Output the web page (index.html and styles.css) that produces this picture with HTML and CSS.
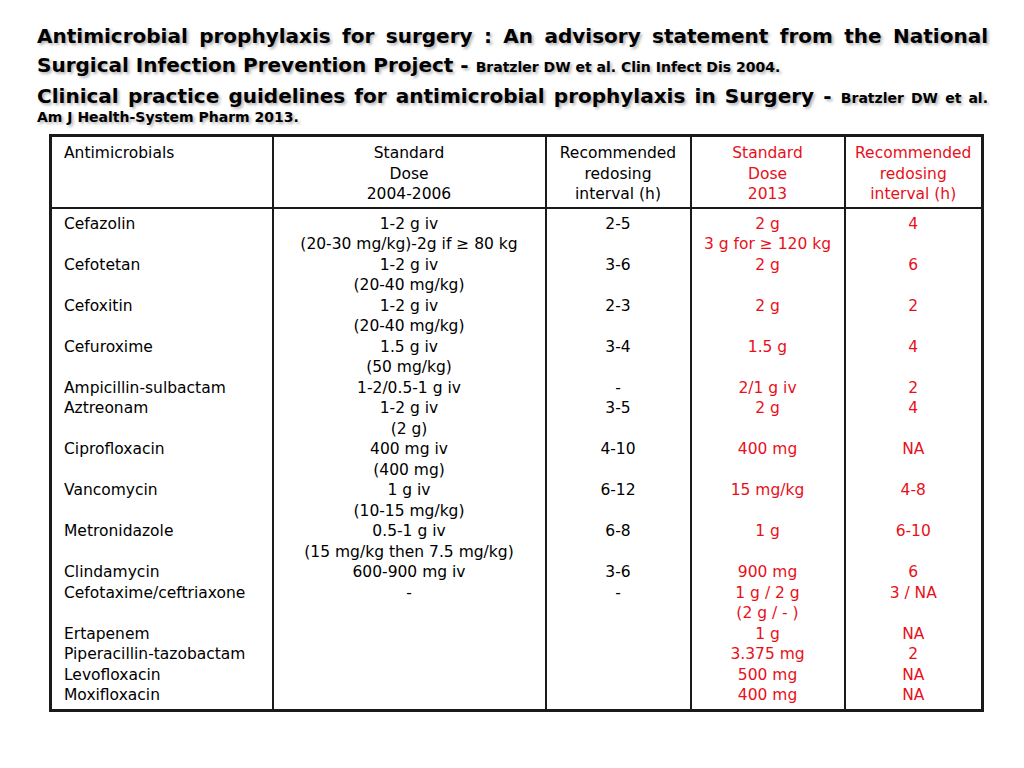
FILE: index.html
```
<!DOCTYPE html>
<html>
<head>
<meta charset="utf-8">
<link rel="stylesheet" href="styles.css">
</head>
<body>
<div class="slide">
  <header class="title">
    <div class="line justify">Antimicrobial prophylaxis for surgery : An advisory statement from the National</div>
    <div class="line">Surgical Infection Prevention Project - <span class="ref">Bratzler DW et al. Clin Infect Dis 2004.</span></div>
    <div class="line justify">Clinical practice guidelines for antimicrobial prophylaxis in Surgery - <span class="ref">Bratzler DW et al.</span></div>
    <div class="line ref small-line">Am J Health-System Pharm 2013.</div>
  </header>
  <table class="drugs">
    <colgroup>
      <col class="c1"><col class="c2"><col class="c3"><col class="c4"><col class="c5">
    </colgroup>
    <thead>
      <tr>
        <th class="left">Antimicrobials</th>
        <th>Standard<br>Dose<br>2004-2006</th>
        <th>Recommended<br>redosing<br>interval (h)</th>
        <th class="red">Standard<br>Dose<br>2013</th>
        <th class="red">Recommended<br>redosing<br>interval (h)</th>
      </tr>
    </thead>
    <tbody>
      <tr><td class="left">Cefazolin</td><td>1-2 g iv<br>(20-30 mg/kg)-2g if ≥ 80 kg</td><td>2-5</td><td class="red">2 g<br>3 g for ≥ 120 kg</td><td class="red">4</td></tr>
      <tr><td class="left">Cefotetan</td><td>1-2 g iv<br>(20-40 mg/kg)</td><td>3-6</td><td class="red">2 g</td><td class="red">6</td></tr>
      <tr><td class="left">Cefoxitin</td><td>1-2 g iv<br>(20-40 mg/kg)</td><td>2-3</td><td class="red">2 g</td><td class="red">2</td></tr>
      <tr><td class="left">Cefuroxime</td><td>1.5 g iv<br>(50 mg/kg)</td><td>3-4</td><td class="red">1.5 g</td><td class="red">4</td></tr>
      <tr><td class="left">Ampicillin-sulbactam</td><td>1-2/0.5-1 g iv</td><td>-</td><td class="red">2/1 g iv</td><td class="red">2</td></tr>
      <tr><td class="left">Aztreonam</td><td>1-2 g iv<br>(2 g)</td><td>3-5</td><td class="red">2 g</td><td class="red">4</td></tr>
      <tr><td class="left">Ciprofloxacin</td><td>400 mg iv<br>(400 mg)</td><td>4-10</td><td class="red">400 mg</td><td class="red">NA</td></tr>
      <tr><td class="left">Vancomycin</td><td>1 g iv<br>(10-15 mg/kg)</td><td>6-12</td><td class="red">15 mg/kg</td><td class="red">4-8</td></tr>
      <tr><td class="left">Metronidazole</td><td>0.5-1 g iv<br>(15 mg/kg then 7.5 mg/kg)</td><td>6-8</td><td class="red">1 g</td><td class="red">6-10</td></tr>
      <tr><td class="left">Clindamycin</td><td>600-900 mg iv</td><td>3-6</td><td class="red">900 mg</td><td class="red">6</td></tr>
      <tr><td class="left">Cefotaxime/ceftriaxone</td><td>-</td><td>-</td><td class="red">1 g / 2 g<br>(2 g / - )</td><td class="red">3 / NA</td></tr>
      <tr><td class="left">Ertapenem</td><td></td><td></td><td class="red">1 g</td><td class="red">NA</td></tr>
      <tr><td class="left">Piperacillin-tazobactam</td><td></td><td></td><td class="red">3.375 mg</td><td class="red">2</td></tr>
      <tr><td class="left">Levofloxacin</td><td></td><td></td><td class="red">500 mg</td><td class="red">NA</td></tr>
      <tr><td class="left">Moxifloxacin</td><td></td><td></td><td class="red">400 mg</td><td class="red">NA</td></tr>
    </tbody>
  </table>
</div>
</body>
</html>
```

FILE: styles.css
```
html, body {
  margin: 0;
  padding: 0;
  background: #ffffff;
}
body {
  font-family: "Comic Sans MS", "DejaVu Sans", sans-serif;
  color: #000;
}
.slide {
  width: 1024px;
  height: 768px;
  padding-top: 22px;
  box-sizing: border-box;
}
.title {
  margin-left: 37px;
  width: 951px;
  font-weight: bold;
  font-size: 20px;
  text-shadow: 2px 2px 3px rgba(0,0,0,0.3);
}
.title .line {
  line-height: 29px;
  white-space: nowrap;
}
.title .line.justify {
  text-align: justify;
  text-align-last: justify;
}
.title .ref {
  font-size: 14px;
}
.title .small-line {
  line-height: 18px;
  margin-top: -5px;
}
.drugs {
  margin-top: 8px;
  margin-left: 49px;
  width: 932px;
  border-collapse: collapse;
  border: 3px solid #1a1a1a;
  table-layout: fixed;
  font-size: 15.5px;
  line-height: 20.5px;
}
.c1 { width: 222px; }
.c2 { width: 273px; }
.c3 { width: 145px; }
.c4 { width: 154px; }
.c5 { width: 138px; }
.drugs th, .drugs td {
  font-weight: normal;
  text-align: center;
  vertical-align: top;
  padding: 0 4px;
  border-left: 2px solid #1a1a1a;
  white-space: nowrap;
}
.drugs th {
  padding-top: 6px;
  padding-bottom: 2px;
  border-bottom: 2px solid #1a1a1a;
}
.drugs tbody tr:first-child td { padding-top: 5px; }
.drugs tbody tr:last-child td { padding-bottom: 3px; }
.drugs .left {
  text-align: left;
  padding-left: 12px;
}
.red { color: #e8101a; }
```
